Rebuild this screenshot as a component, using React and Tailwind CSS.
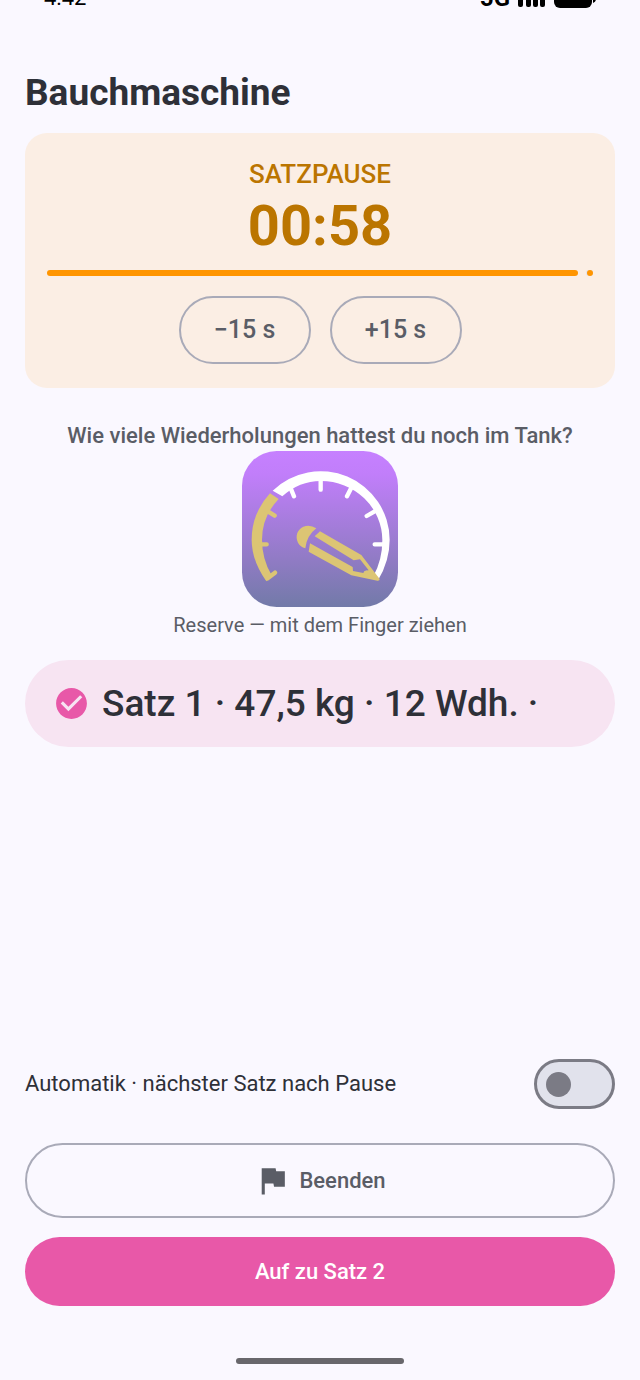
import { useState } from "react";
import { MdCheckCircle, MdFlag } from "react-icons/md";

function StatusBar() {
  return (
    <header className="flex h-[10px] items-end justify-between overflow-hidden pr-11 pl-11 text-black">
      <span className="text-[22px] leading-6">4:42</span>
      <div className="flex items-end gap-2">
        <span className="text-[24px] leading-6 font-bold">5G</span>
        <svg className="h-5 w-7" viewBox="0 0 28 20" aria-hidden="true">
          <rect x="0" y="8" width="5" height="9" rx="2" />
          <rect x="8" y="5" width="5" height="12" rx="2" />
          <rect x="15" y="2" width="5" height="15" rx="2" />
          <rect x="22" y="0" width="5" height="17" rx="2" />
        </svg>
        <svg className="h-5 w-[42px]" viewBox="0 0 42 20" aria-hidden="true">
          <rect x="0" y="-2" width="38" height="20" rx="6" />
          <path d="M39 4v9q3-1 3-4t-3-5z" />
        </svg>
      </div>
    </header>
  );
}

function PauseCard() {
  const [seconds, setSeconds] = useState(58);
  const mm = String(Math.floor(seconds / 60)).padStart(2, "0");
  const ss = String(seconds % 60).padStart(2, "0");
  const adjust =
    "h-[68px] w-[132px] rounded-full border-2 border-[#a9aab8] text-[25px] font-medium text-[#5a5d66]";
  return (
    <section className="flex flex-col items-center rounded-[22px] bg-[#fbeee4] px-[22px] pt-[23px] pb-6">
      <h2 className="text-[26px] leading-9 font-medium text-[#bb7500]">SATZPAUSE</h2>
      <p className="text-[56px] leading-[68px] font-bold text-[#bb7500]">{mm}:{ss}</p>
      <div className="mt-[10px] flex w-full items-center gap-2" role="progressbar" aria-label="Satzpause" aria-valuenow={seconds} aria-valuemax={60}>
        <div className="h-[6px] flex-1 rounded-full bg-[#ff9500]" />
        <div className="flex h-[6px] w-[7px] justify-end rounded-full bg-[#e1e2ec]">
          <div className="size-[6px] rounded-full bg-[#ff9500]" />
        </div>
      </div>
      <div className="mt-5 flex gap-[19px]">
        <button className={adjust} onClick={() => setSeconds(Math.max(0, seconds - 15))}>−15 s</button>
        <button className={adjust} onClick={() => setSeconds(seconds + 15)}>+15 s</button>
      </div>
    </section>
  );
}

function ReserveGauge() {
  return (
    <svg className="size-[156px]" viewBox="22 16 468 468" role="img" aria-label="Reserve">
      <defs>
        <linearGradient id="tile" x1="0" y1="0" x2="0" y2="1">
          <stop offset="0" stopColor="#c680ff" />
          <stop offset="0.15" stopColor="#c17efa" />
          <stop offset="0.7" stopColor="#907bc4" />
          <stop offset="1" stopColor="#727aa8" />
        </linearGradient>
      </defs>
      <rect x="22" y="16" width="468" height="468" rx="104" fill="url(#tile)" />
      <path fill="#fff" d="M114 135A207 207 0 0 1 465 282Q465 345 430 404L416 392Q443 343 443 284A184 178 0 0 0 258 106Q194 106 143 152Z" />
      <g stroke="#fff" strokeWidth="13" strokeLinecap="round">
        <path d="M258 100V132M350 126L337 152M420 197L396 211M450 296H420M167 125L178 152M404 388L395 382" />
      </g>
      <path fill="#dcc574" d="M106 143L132 160Q82 212 82 282Q82 340 111 389L95 407Q51 345 51 282Q51 203 106 143Z" />
      <path stroke="#dcc574" strokeWidth="13" strokeLinecap="round" fill="none" d="M96 195L120 210M76 296H96M99 398L121 381" />
      <path fill="#dcc574" d="M245 248Q226 235 206 243C187 252 181 272 190 291Q197 304 212 308Q216 270 245 248Z" />
      <path fill="#dcc574" d="M256 257L380 328L435 400Q435 406 428 405L350 389L222 318L226 293L354 364L355 376L386 382Q388 374 402 374L376 341L357 344L240 272Z" />
    </svg>
  );
}

export default function App() {
  const [auto, setAuto] = useState(false);
  return (
    <div className="flex min-h-screen flex-col bg-[#faf8ff] font-[Roboto,sans-serif] text-[#2e3038]">
      <StatusBar />
      <main className="flex flex-1 flex-col px-[25px]">
        <h1 className="mt-[59px] mb-4 text-[37px] leading-[48px] font-bold">Bauchmaschine</h1>
        <PauseCard />
        <section className="mt-[33px] flex flex-col items-center">
          <h2 className="text-[22px] leading-[30px] font-medium text-[#5a5d66]">Wie viele Wiederholungen hattest du noch im Tank?</h2>
          <ReserveGauge />
          <p className="mt-[6px] text-[20px] leading-6 text-[#5a5d66]">Reserve — mit dem Finger ziehen</p>
        </section>
        <div className="mt-[23px] flex h-[87px] items-center gap-3 rounded-full bg-[#f7e4f2] px-7">
          <MdCheckCircle className="size-[37px] shrink-0 text-[#e858a8]" aria-hidden="true" />
          <span className="text-[37px] leading-[48px] font-medium whitespace-nowrap">Satz 1 · 47,5 kg · 12 Wdh. ·</span>
        </div>
        <div className="mt-auto flex items-center justify-between">
          <label htmlFor="auto" className="text-[22px] leading-8">Automatik · nächster Satz nach Pause</label>
          <input
            id="auto"
            type="checkbox"
            role="switch"
            checked={auto}
            onChange={(e) => setAuto(e.target.checked)}
            className="flex h-[50px] w-[81px] appearance-none items-center rounded-full border-[3px] border-[#7b7b85] bg-[#e1e2ec] px-[9px] before:size-[25px] before:rounded-full before:bg-[#7b7b85] checked:justify-end"
          />
        </div>
        <button className="mt-[34px] flex h-[75px] items-center justify-center gap-2 rounded-full border-2 border-[#a9aab8] text-[22px] font-medium text-[#5a5d66]">
          <MdFlag className="size-[37px]" aria-hidden="true" />
          Beenden
        </button>
        <button className="mt-[19px] h-[69px] rounded-full bg-[#e858a8] text-[22px] font-medium text-white">Auf zu Satz 2</button>
      </main>
      <footer className="flex justify-center pt-[52px] pb-4">
        <div className="h-[6px] w-[168px] rounded-full bg-[#68676c]" />
      </footer>
    </div>
  );
}
